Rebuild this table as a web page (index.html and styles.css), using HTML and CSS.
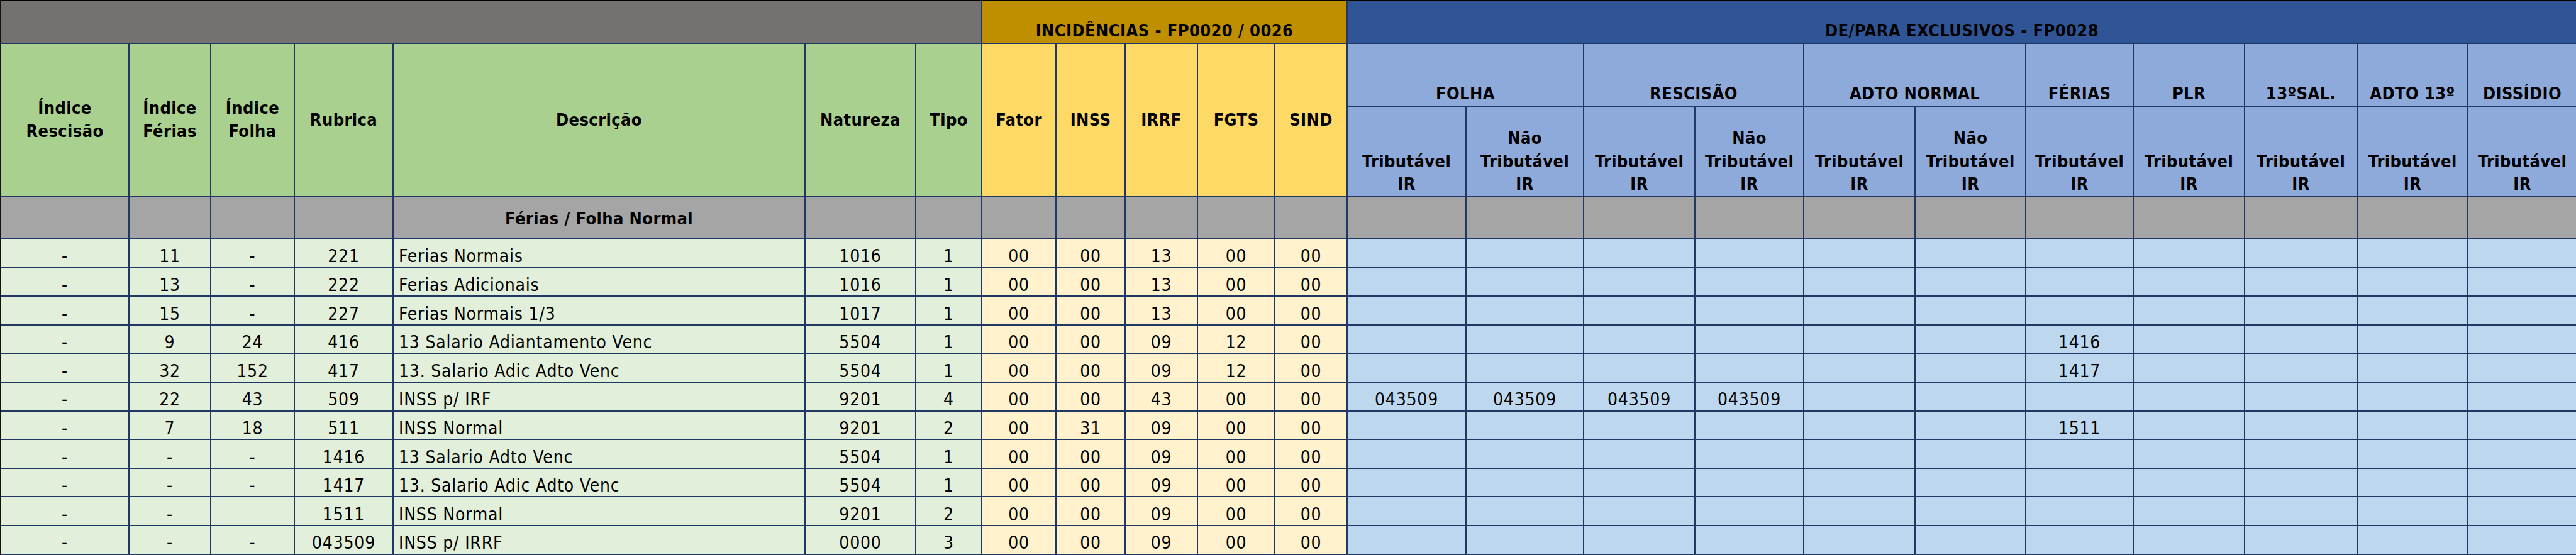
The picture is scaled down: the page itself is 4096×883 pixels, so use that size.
FILE: index.html
```html
<!DOCTYPE html>
<html lang="pt-BR">
<head>
<meta charset="utf-8">
<title>De/Para Rubricas</title>
<link rel="stylesheet" href="styles.css">
</head>
<body>
<div class="sheet">
  <!-- title row -->
  <div class="c t-gray"></div>
  <div class="c t-gold">INCIDÊNCIAS - FP0020 / 0026</div>
  <div class="c t-blue">DE/PARA EXCLUSIVOS - FP0028</div>

  <!-- header rows -->
  <div class="c h-green tall">Índice<br>Rescisão</div>
  <div class="c h-green tall">Índice<br>Férias</div>
  <div class="c h-green tall">Índice<br>Folha</div>
  <div class="c h-green tall">Rubrica</div>
  <div class="c h-green tall">Descrição</div>
  <div class="c h-green tall">Natureza</div>
  <div class="c h-green tall">Tipo</div>
  <div class="c h-yellow tall">Fator</div>
  <div class="c h-yellow tall">INSS</div>
  <div class="c h-yellow tall">IRRF</div>
  <div class="c h-yellow tall">FGTS</div>
  <div class="c h-yellow tall">SIND</div>
  <div class="c h-blue grp pair">FOLHA</div>
  <div class="c h-blue grp pair">RESCISÃO</div>
  <div class="c h-blue grp pair">ADTO NORMAL</div>
  <div class="c h-blue grp">FÉRIAS</div>
  <div class="c h-blue grp">PLR</div>
  <div class="c h-blue grp">13ºSAL.</div>
  <div class="c h-blue grp">ADTO 13º</div>
  <div class="c h-blue grp">DISSÍDIO</div>

  <div class="c h-blue sub">Tributável<br>IR</div>
  <div class="c h-blue sub">Não<br>Tributável<br>IR</div>
  <div class="c h-blue sub">Tributável<br>IR</div>
  <div class="c h-blue sub">Não<br>Tributável<br>IR</div>
  <div class="c h-blue sub">Tributável<br>IR</div>
  <div class="c h-blue sub">Não<br>Tributável<br>IR</div>
  <div class="c h-blue sub">Tributável<br>IR</div>
  <div class="c h-blue sub">Tributável<br>IR</div>
  <div class="c h-blue sub">Tributável<br>IR</div>
  <div class="c h-blue sub">Tributável<br>IR</div>
  <div class="c h-blue sub">Tributável<br>IR</div>

  <!-- section row -->
  <div class="c sec"></div><div class="c sec"></div><div class="c sec"></div><div class="c sec"></div>
  <div class="c sec sec-title">Férias / Folha Normal</div>
  <div class="c sec"></div><div class="c sec"></div><div class="c sec"></div><div class="c sec"></div><div class="c sec"></div><div class="c sec"></div><div class="c sec"></div>
  <div class="c sec"></div><div class="c sec"></div><div class="c sec"></div><div class="c sec"></div><div class="c sec"></div><div class="c sec"></div><div class="c sec"></div><div class="c sec"></div><div class="c sec"></div><div class="c sec"></div><div class="c sec"></div>

  <!-- row 1 -->
  <div class="c g">-</div><div class="c g">11</div><div class="c g">-</div><div class="c g">221</div><div class="c g l">Ferias Normais</div><div class="c g">1016</div><div class="c g">1</div>
  <div class="c y">00</div><div class="c y">00</div><div class="c y">13</div><div class="c y">00</div><div class="c y">00</div>
  <div class="c b"></div><div class="c b"></div><div class="c b"></div><div class="c b"></div><div class="c b"></div><div class="c b"></div><div class="c b"></div><div class="c b"></div><div class="c b"></div><div class="c b"></div><div class="c b"></div>

  <!-- row 2 -->
  <div class="c g">-</div><div class="c g">13</div><div class="c g">-</div><div class="c g">222</div><div class="c g l">Ferias Adicionais</div><div class="c g">1016</div><div class="c g">1</div>
  <div class="c y">00</div><div class="c y">00</div><div class="c y">13</div><div class="c y">00</div><div class="c y">00</div>
  <div class="c b"></div><div class="c b"></div><div class="c b"></div><div class="c b"></div><div class="c b"></div><div class="c b"></div><div class="c b"></div><div class="c b"></div><div class="c b"></div><div class="c b"></div><div class="c b"></div>

  <!-- row 3 -->
  <div class="c g">-</div><div class="c g">15</div><div class="c g">-</div><div class="c g">227</div><div class="c g l">Ferias Normais 1/3</div><div class="c g">1017</div><div class="c g">1</div>
  <div class="c y">00</div><div class="c y">00</div><div class="c y">13</div><div class="c y">00</div><div class="c y">00</div>
  <div class="c b"></div><div class="c b"></div><div class="c b"></div><div class="c b"></div><div class="c b"></div><div class="c b"></div><div class="c b"></div><div class="c b"></div><div class="c b"></div><div class="c b"></div><div class="c b"></div>

  <!-- row 4 -->
  <div class="c g">-</div><div class="c g">9</div><div class="c g">24</div><div class="c g">416</div><div class="c g l">13 Salario Adiantamento Venc</div><div class="c g">5504</div><div class="c g">1</div>
  <div class="c y">00</div><div class="c y">00</div><div class="c y">09</div><div class="c y">12</div><div class="c y">00</div>
  <div class="c b"></div><div class="c b"></div><div class="c b"></div><div class="c b"></div><div class="c b"></div><div class="c b"></div><div class="c b">1416</div><div class="c b"></div><div class="c b"></div><div class="c b"></div><div class="c b"></div>

  <!-- row 5 -->
  <div class="c g">-</div><div class="c g">32</div><div class="c g">152</div><div class="c g">417</div><div class="c g l">13. Salario Adic Adto Venc</div><div class="c g">5504</div><div class="c g">1</div>
  <div class="c y">00</div><div class="c y">00</div><div class="c y">09</div><div class="c y">12</div><div class="c y">00</div>
  <div class="c b"></div><div class="c b"></div><div class="c b"></div><div class="c b"></div><div class="c b"></div><div class="c b"></div><div class="c b">1417</div><div class="c b"></div><div class="c b"></div><div class="c b"></div><div class="c b"></div>

  <!-- row 6 -->
  <div class="c g">-</div><div class="c g">22</div><div class="c g">43</div><div class="c g">509</div><div class="c g l">INSS p/ IRF</div><div class="c g">9201</div><div class="c g">4</div>
  <div class="c y">00</div><div class="c y">00</div><div class="c y">43</div><div class="c y">00</div><div class="c y">00</div>
  <div class="c b">043509</div><div class="c b">043509</div><div class="c b">043509</div><div class="c b">043509</div><div class="c b"></div><div class="c b"></div><div class="c b"></div><div class="c b"></div><div class="c b"></div><div class="c b"></div><div class="c b"></div>

  <!-- row 7 -->
  <div class="c g">-</div><div class="c g">7</div><div class="c g">18</div><div class="c g">511</div><div class="c g l">INSS Normal</div><div class="c g">9201</div><div class="c g">2</div>
  <div class="c y">00</div><div class="c y">31</div><div class="c y">09</div><div class="c y">00</div><div class="c y">00</div>
  <div class="c b"></div><div class="c b"></div><div class="c b"></div><div class="c b"></div><div class="c b"></div><div class="c b"></div><div class="c b">1511</div><div class="c b"></div><div class="c b"></div><div class="c b"></div><div class="c b"></div>

  <!-- row 8 -->
  <div class="c g">-</div><div class="c g">-</div><div class="c g">-</div><div class="c g">1416</div><div class="c g l">13 Salario Adto Venc</div><div class="c g">5504</div><div class="c g">1</div>
  <div class="c y">00</div><div class="c y">00</div><div class="c y">09</div><div class="c y">00</div><div class="c y">00</div>
  <div class="c b"></div><div class="c b"></div><div class="c b"></div><div class="c b"></div><div class="c b"></div><div class="c b"></div><div class="c b"></div><div class="c b"></div><div class="c b"></div><div class="c b"></div><div class="c b"></div>

  <!-- row 9 -->
  <div class="c g">-</div><div class="c g">-</div><div class="c g">-</div><div class="c g">1417</div><div class="c g l">13. Salario Adic Adto Venc</div><div class="c g">5504</div><div class="c g">1</div>
  <div class="c y">00</div><div class="c y">00</div><div class="c y">09</div><div class="c y">00</div><div class="c y">00</div>
  <div class="c b"></div><div class="c b"></div><div class="c b"></div><div class="c b"></div><div class="c b"></div><div class="c b"></div><div class="c b"></div><div class="c b"></div><div class="c b"></div><div class="c b"></div><div class="c b"></div>

  <!-- row 10 -->
  <div class="c g">-</div><div class="c g">-</div><div class="c g"></div><div class="c g">1511</div><div class="c g l">INSS Normal</div><div class="c g">9201</div><div class="c g">2</div>
  <div class="c y">00</div><div class="c y">00</div><div class="c y">09</div><div class="c y">00</div><div class="c y">00</div>
  <div class="c b"></div><div class="c b"></div><div class="c b"></div><div class="c b"></div><div class="c b"></div><div class="c b"></div><div class="c b"></div><div class="c b"></div><div class="c b"></div><div class="c b"></div><div class="c b"></div>

  <!-- row 11 -->
  <div class="c g">-</div><div class="c g">-</div><div class="c g">-</div><div class="c g">043509</div><div class="c g l">INSS p/ IRRF</div><div class="c g">0000</div><div class="c g">3</div>
  <div class="c y">00</div><div class="c y">00</div><div class="c y">09</div><div class="c y">00</div><div class="c y">00</div>
  <div class="c b"></div><div class="c b"></div><div class="c b"></div><div class="c b"></div><div class="c b"></div><div class="c b"></div><div class="c b"></div><div class="c b"></div><div class="c b"></div><div class="c b"></div><div class="c b"></div>
</div>
</body>
</html>
```

FILE: styles.css
```css
html, body {
  margin: 0;
  padding: 0;
  background: #ffffff;
}

body {
  font-family: "DejaVu Sans Condensed", "DejaVu Sans", sans-serif;
  font-size: 28px;
  color: #000000;
}

.sheet {
  width: 4096px;
  height: 883px;
  box-sizing: border-box;
  display: grid;
  grid-template-columns:
    202px 128px 131px 155px 653px 174px 103px
    116px 108px 113px 121px 113px
    187px 185px 175px 171px 175px 174px 169px 175px 177px 174px 171px;
  grid-template-rows: 66px 99px 141px 65px repeat(11, 43.6px);
  gap: 2px;
  background: #203864;
  border-top: 2px solid #000000;
  border-left: 2px solid #111111;
  padding-bottom: 2px;
}

.c {
  display: flex;
  align-items: flex-end;
  justify-content: center;
  text-align: center;
  line-height: 1.15;
  white-space: nowrap;
}

/* title row */
.t-gray {
  grid-column: 1 / 8;
  background: #757171;
}
.t-gold,
.t-blue {
  font-size: 27px;
  font-weight: bold;
  letter-spacing: 0.4px;
  line-height: 1.22;
  padding-bottom: 2px;
}
.t-gold {
  grid-column: 8 / 13;
  background: #bf8f00;
}
.t-blue {
  grid-column: 13 / 24;
  background: #2f5597;
}

/* headers */
.h-green,
.h-yellow,
.h-blue {
  font-size: 27px;
  font-weight: bold;
  letter-spacing: 0.4px;
  line-height: 1.36;
}
.tall {
  grid-row: span 2;
  align-items: center;
}
.h-green { background: #a9d08e; }
.h-yellow { background: #ffd966; }
.h-blue { background: #8eaadb; }
.grp { padding-bottom: 1px; }
.pair { grid-column: span 2; }
.sub { padding-bottom: 0; }

/* section row */
.sec { background: #a5a5a5; }
.sec-title {
  align-items: center;
  font-size: 27px;
  font-weight: bold;
  letter-spacing: 0.4px;
  line-height: 1.22;
  padding-top: 4px;
}

/* data cells */
.g,
.y,
.b {
  letter-spacing: 0.8px;
}
.g { background: #e2efda; }
.y { background: #fff2cc; }
.b { background: #bdd7ee; }
.l {
  justify-content: flex-start;
  padding-left: 8px;
}
```
